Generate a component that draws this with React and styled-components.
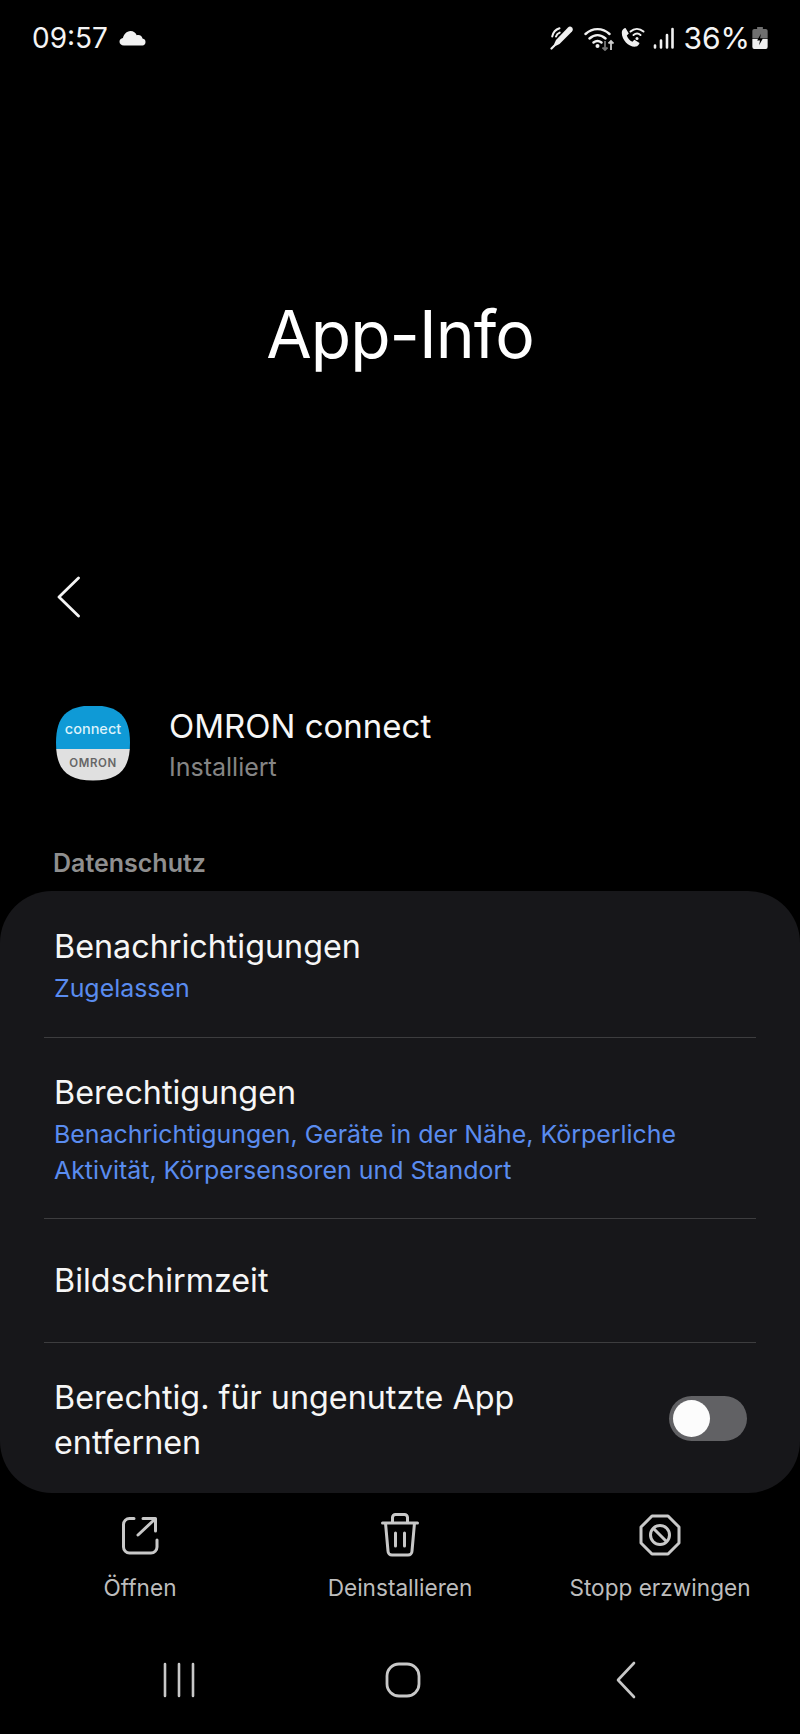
import React from "react";
import styled, { createGlobalStyle } from "styled-components";

const GlobalStyle = createGlobalStyle`
  html, body {
    margin: 0;
    padding: 0;
    background: #000;
  }
  body {
    font-family: Inter, "Noto Sans", sans-serif;
    color: #fafafa;
  }
`;

const Screen = styled.div`
  width: 800px;
  height: 1734px;
  background: #000;
  display: flex;
  flex-direction: column;
  overflow: hidden;
`;

const StatusBar = styled.div`
  height: 76px;
  padding: 0 32px;
  display: flex;
  align-items: center;
  justify-content: space-between;
  flex-shrink: 0;
`;

const StatusGroup = styled.div`
  display: flex;
  align-items: center;
`;

const StatusText = styled.span`
  font-size: ${(p) => p.$size || 28}px;
  margin-left: ${(p) => p.$ml || 0}px;
  color: #f4f4f4;
`;

const TitleArea = styled.div`
  height: 491px;
  display: flex;
  justify-content: center;
  padding-top: 216px;
  box-sizing: border-box;
`;

const PageTitle = styled.h1`
  margin: 0;
  font-size: 66px;
  line-height: 84px;
  font-weight: 400;
  letter-spacing: -1px;
  color: #fff;
`;

const BackRow = styled.div`
  height: 60px;
  padding-left: 56px;
  display: flex;
  align-items: center;
`;

const AppRow = styled.div`
  margin-top: 76px;
  padding-left: 56px;
  display: flex;
  align-items: center;
  gap: 39px;
`;

const AppIcon = styled.div`
  width: 74px;
  height: 75px;
  clip-path: path("M37 0C63 0 74 11 74 37.500C74 64 63 75 37 75C11 75 0 64 0 37.500C0 11 11 0 37 0Z");
  display: flex;
  flex-direction: column;
`;

const IconTop = styled.div`
  height: 43px;
  background: #0f9ad6;
  color: #dcf2fb;
  font-size: 14.5px;
  font-weight: 500;
  display: flex;
  align-items: flex-end;
  justify-content: center;
  padding-bottom: 12px;
  box-sizing: border-box;
`;

const IconBottom = styled.div`
  flex: 1;
  background: #e0e0e0;
  color: #666;
  font-size: 11.5px;
  font-weight: 600;
  letter-spacing: 0.6px;
  padding-bottom: 3px;
  display: flex;
  align-items: center;
  justify-content: center;
`;

const AppText = styled.div`
  padding-top: 3px;
`;

const AppName = styled.div`
  font-size: 33px;
  line-height: 40px;
  color: #f6f6f6;
`;

const AppStatus = styled.div`
  font-size: 25px;
  line-height: 32px;
  margin-top: 5px;
  color: #858585;
`;

const SectionLabel = styled.div`
  margin-top: 64px;
  padding-left: 53px;
  font-size: 25px;
  line-height: 32px;
  font-weight: 600;
  color: #8f8f8f;
`;

const Card = styled.div`
  margin-top: 12px;
  height: 602px;
  background: #17171a;
  border-radius: 52px;
  padding: 0 44px;
  box-sizing: border-box;
  display: flex;
  flex-direction: column;
`;

const Row = styled.div`
  height: ${(p) => p.$height}px;
  padding: ${(p) => p.$nudge || 0}px 10px 0;
  display: flex;
  align-items: center;
  justify-content: space-between;
  gap: 40px;
  border-bottom: ${(p) => (p.$last ? "none" : "1px solid #3d3d3f")};
  box-sizing: border-box;
`;

const RowTitle = styled.div`
  font-size: 32.3px;
  line-height: 45px;
  color: #f6f6f6;
`;

const RowSub = styled.div`
  font-size: 24.9px;
  line-height: 35.500px;
  margin-top: 2px;
  color: #5a8cef;
`;

const Toggle = styled.div`
  width: 78px;
  height: 45px;
  border-radius: 23px;
  background: #616164;
  padding: 4px;
  box-sizing: border-box;
  flex-shrink: 0;
  margin: -4px -1px 0 0;
`;

const Knob = styled.div`
  width: 37px;
  height: 37px;
  border-radius: 50%;
  background: #fcfcfc;
`;

const ActionBar = styled.div`
  margin-top: 20px;
  display: grid;
  grid-template-columns: 280px 240px 280px;
`;

const Action = styled.div`
  display: flex;
  flex-direction: column;
  align-items: center;
  gap: 15px;
`;

const ActionGlyph = styled.div`
  height: 44px;
  display: flex;
  align-items: center;
  justify-content: center;
`;

const ActionLabel = styled.span`
  font-size: 22.6px;
  line-height: 32px;
  color: #bdbdbd;
`;

const NavBar = styled.div`
  margin-top: 57px;
  padding: 0 163px 0 162px;
  display: flex;
  align-items: center;
  justify-content: space-between;
`;

const Line = { fill: "none", stroke: "currentColor", strokeLinecap: "round", strokeLinejoin: "round" };

const IconSvg = styled.svg`
  display: block;
  flex-shrink: 0;
  color: ${(p) => p.$color || "#c8c8c8"};
  margin-left: ${(p) => p.$ml || 0}px;
`;

const Cloud = () => (
  <IconSvg $color="#f2f2f2" $ml={11} width="27" height="16" viewBox="0 0 27 16">
    <path fill="currentColor" d="M5 15.500C2.200 15.500.5 13.800.5 11.800c0-2 1.500-3.400 3.400-3.700C4.800 4.700 7.500 1 11.500 1c3 0 5.300 1.700 6.200 4.200 .5-.1 1-.2 1.500-.2 2.500 0 4 1.700 4.300 3.600 1.800.3 3 1.500 3 3.300 0 2-1.300 3.600-3 3.600z" />
  </IconSvg>
);

const PenIcon = () => (
  <IconSvg $color="#f0f0f0" width="24" height="24" viewBox="0 0 24 24">
    <path fill="currentColor" d="M18 1.500c1.200-1.200 2.800-1.200 4 0 1.100 1.100 1.100 2.800 0 4L9.500 18l-5 2.500-1-1L6 14z" />
    <path {...Line} strokeWidth="2.200" d="M1.500 22.500l2.500-2.500" />
    <path {...Line} strokeWidth="2" d="M2.200 10.500C3 6.500 5.500 3.500 9.500 2.200M6 10.500c.6-2 1.800-3.200 3.700-3.900" />
  </IconSvg>
);

const WifiIcon = () => (
  <IconSvg $color="#f0f0f0" $ml={10} width="30" height="25" viewBox="0 0 30 25">
    <path {...Line} strokeWidth="2.400" d="M1.500 8c7-6.500 17-6.500 24 0M5.500 12.500c5-4.500 11-4.500 16 0M9.500 16.500c2.500-2 5.500-2 8 0" />
    <circle cx="13.500" cy="20" r="2" fill="currentColor" />
    <path fill="none" stroke="#777" strokeWidth="1.800" d="M21 15v9M18.500 21.500l2.500 2.500 2.500-2.500" />
    <path fill="none" stroke="#cfcfcf" strokeWidth="1.800" d="M27 24v-9M24.500 17.500L27 15l2.500 2.500" />
  </IconSvg>
);

const CallWifiIcon = () => (
  <IconSvg $color="#f0f0f0" $ml={7} width="24" height="22" viewBox="0 0 24 22">
    <path fill="currentColor" d="M1 4c.5-1.500 2-3 3.500-3l3.300 5.500-2 2c.9 2.600 3 5.300 5.600 6.200l2-1.900 5.100 3.100c-.4 1.700-1.900 3.300-3.600 3.700C7.500 20.500-.5 11.500 1 4z" />
    <path {...Line} strokeWidth="2" d="M9.500 4.500c3.800-3.500 9-3.500 13 0M12.500 8c2.200-1.800 5-1.800 7 0" />
    <circle cx="16" cy="11.500" r="1.500" fill="currentColor" />
  </IconSvg>
);

const SignalIcon = () => (
  <IconSvg $color="#f0f0f0" $ml={8} width="21" height="22" viewBox="0 0 21 22">
    <path {...Line} strokeWidth="2.600" d="M2 20.500v-2M8 20.500v-7M14 20.500V8M19.500 20.500V2" />
  </IconSvg>
);

const BatteryIcon = () => (
  <IconSvg $color="#efefef" $ml={2} width="16" height="22" viewBox="0 0 16 23">
    <path fill="#6f6f6f" d="M5 0h6v2h3a2 2 0 0 1 2 2v8H0V4a2 2 0 0 1 2-2h3z" />
    <path fill="currentColor" d="M0 12.500h16V21a2 2 0 0 1-2 2H2a2 2 0 0 1-2-2z" />
    <path fill="#000" d="M9 7l-4 7h3l-1 5 4-7H8z" />
  </IconSvg>
);

const BackIcon = () => (
  <IconSvg $color="#f4f4f4" width="24" height="42" viewBox="0 0 24 42">
    <path {...Line} strokeWidth="2.800" d="M22.500 2L3 21l19.500 19" />
  </IconSvg>
);

const OpenIcon = () => (
  <IconSvg width="40" height="41" viewBox="0 0 40 41">
    <path {...Line} strokeWidth="3" d="M14 3.500H9.500a6 6 0 0 0-6 6V32a6 6 0 0 0 6 6H31a6 6 0 0 0 6-6v-7" />
    <path {...Line} strokeWidth="3" d="M18 20L34 5M23 3.500h12.500V16" />
  </IconSvg>
);

const TrashIcon = () => (
  <IconSvg width="40" height="44" viewBox="0 0 40 44">
    <path {...Line} strokeWidth="3" d="M2.500 10h35M12.500 10V4.500a3 3 0 0 1 3-3h9a3 3 0 0 1 3 3V10M5.500 10L8 38a4 4 0 0 0 4 4h16a4 4 0 0 0 4-4l2.500-28M15.500 20v13M24.500 20v13" />
  </IconSvg>
);

const StopIcon = () => (
  <IconSvg width="42" height="42" viewBox="0 0 42 42">
    <path {...Line} strokeWidth="3" d="M13 2h16l11 11v16L29 40H13L2 29V13z" />
    <circle cx="21" cy="21" r="9.500" {...Line} strokeWidth="3" />
    <path {...Line} strokeWidth="3" d="M15 15l12 12" />
  </IconSvg>
);

const RecentsIcon = () => (
  <IconSvg width="34" height="36" viewBox="0 0 34 36">
    <path {...Line} strokeWidth="2.600" d="M3 2v32M17 2v32M31 2v32" />
  </IconSvg>
);

const HomeIcon = () => (
  <IconSvg $ml={-5} width="36" height="36" viewBox="0 0 36 36">
    <rect x="2" y="2" width="32" height="32" rx="12" {...Line} strokeWidth="2.800" />
  </IconSvg>
);

const NavBackIcon = () => (
  <IconSvg width="22" height="38" viewBox="0 0 22 38">
    <path {...Line} strokeWidth="2.600" d="M19 2L3 19l16 17" />
  </IconSvg>
);

export default function App() {
  return (
    <Screen>
      <GlobalStyle />
      <StatusBar>
        <StatusGroup>
          <StatusText>09:57</StatusText>
          <Cloud />
        </StatusGroup>
        <StatusGroup>
          <PenIcon />
          <WifiIcon />
          <CallWifiIcon />
          <SignalIcon />
          <StatusText $size={30} $ml={9}>36%</StatusText>
          <BatteryIcon />
        </StatusGroup>
      </StatusBar>

      <TitleArea>
        <PageTitle>App-Info</PageTitle>
      </TitleArea>

      <BackRow>
        <BackIcon />
      </BackRow>

      <AppRow>
        <AppIcon>
          <IconTop>connect</IconTop>
          <IconBottom>OMRON</IconBottom>
        </AppIcon>
        <AppText>
          <AppName>OMRON connect</AppName>
          <AppStatus>Installiert</AppStatus>
        </AppText>
      </AppRow>

      <SectionLabel>Datenschutz</SectionLabel>

      <Card>
        <Row $height={147} $nudge={3}>
          <div>
            <RowTitle>Benachrichtigungen</RowTitle>
            <RowSub>Zugelassen</RowSub>
          </div>
        </Row>
        <Row $height={181} $nudge={2}>
          <div>
            <RowTitle>Berechtigungen</RowTitle>
            <RowSub>
              Benachrichtigungen, Geräte in der Nähe, Körperliche
              <br />
              Aktivität, Körpersensoren und Standort
            </RowSub>
          </div>
        </Row>
        <Row $height={124}>
          <RowTitle>Bildschirmzeit</RowTitle>
        </Row>
        <Row $height={150} $nudge={4} $last>
          <RowTitle>
            Berechtig. für ungenutzte App
            <br />
            entfernen
          </RowTitle>
          <Toggle>
            <Knob />
          </Toggle>
        </Row>
      </Card>

      <ActionBar>
        <Action>
          <ActionGlyph>
            <OpenIcon />
          </ActionGlyph>
          <ActionLabel>Öffnen</ActionLabel>
        </Action>
        <Action>
          <ActionGlyph>
            <TrashIcon />
          </ActionGlyph>
          <ActionLabel>Deinstallieren</ActionLabel>
        </Action>
        <Action>
          <ActionGlyph>
            <StopIcon />
          </ActionGlyph>
          <ActionLabel>Stopp erzwingen</ActionLabel>
        </Action>
      </ActionBar>

      <NavBar>
        <RecentsIcon />
        <HomeIcon />
        <NavBackIcon />
      </NavBar>
    </Screen>
  );
}
